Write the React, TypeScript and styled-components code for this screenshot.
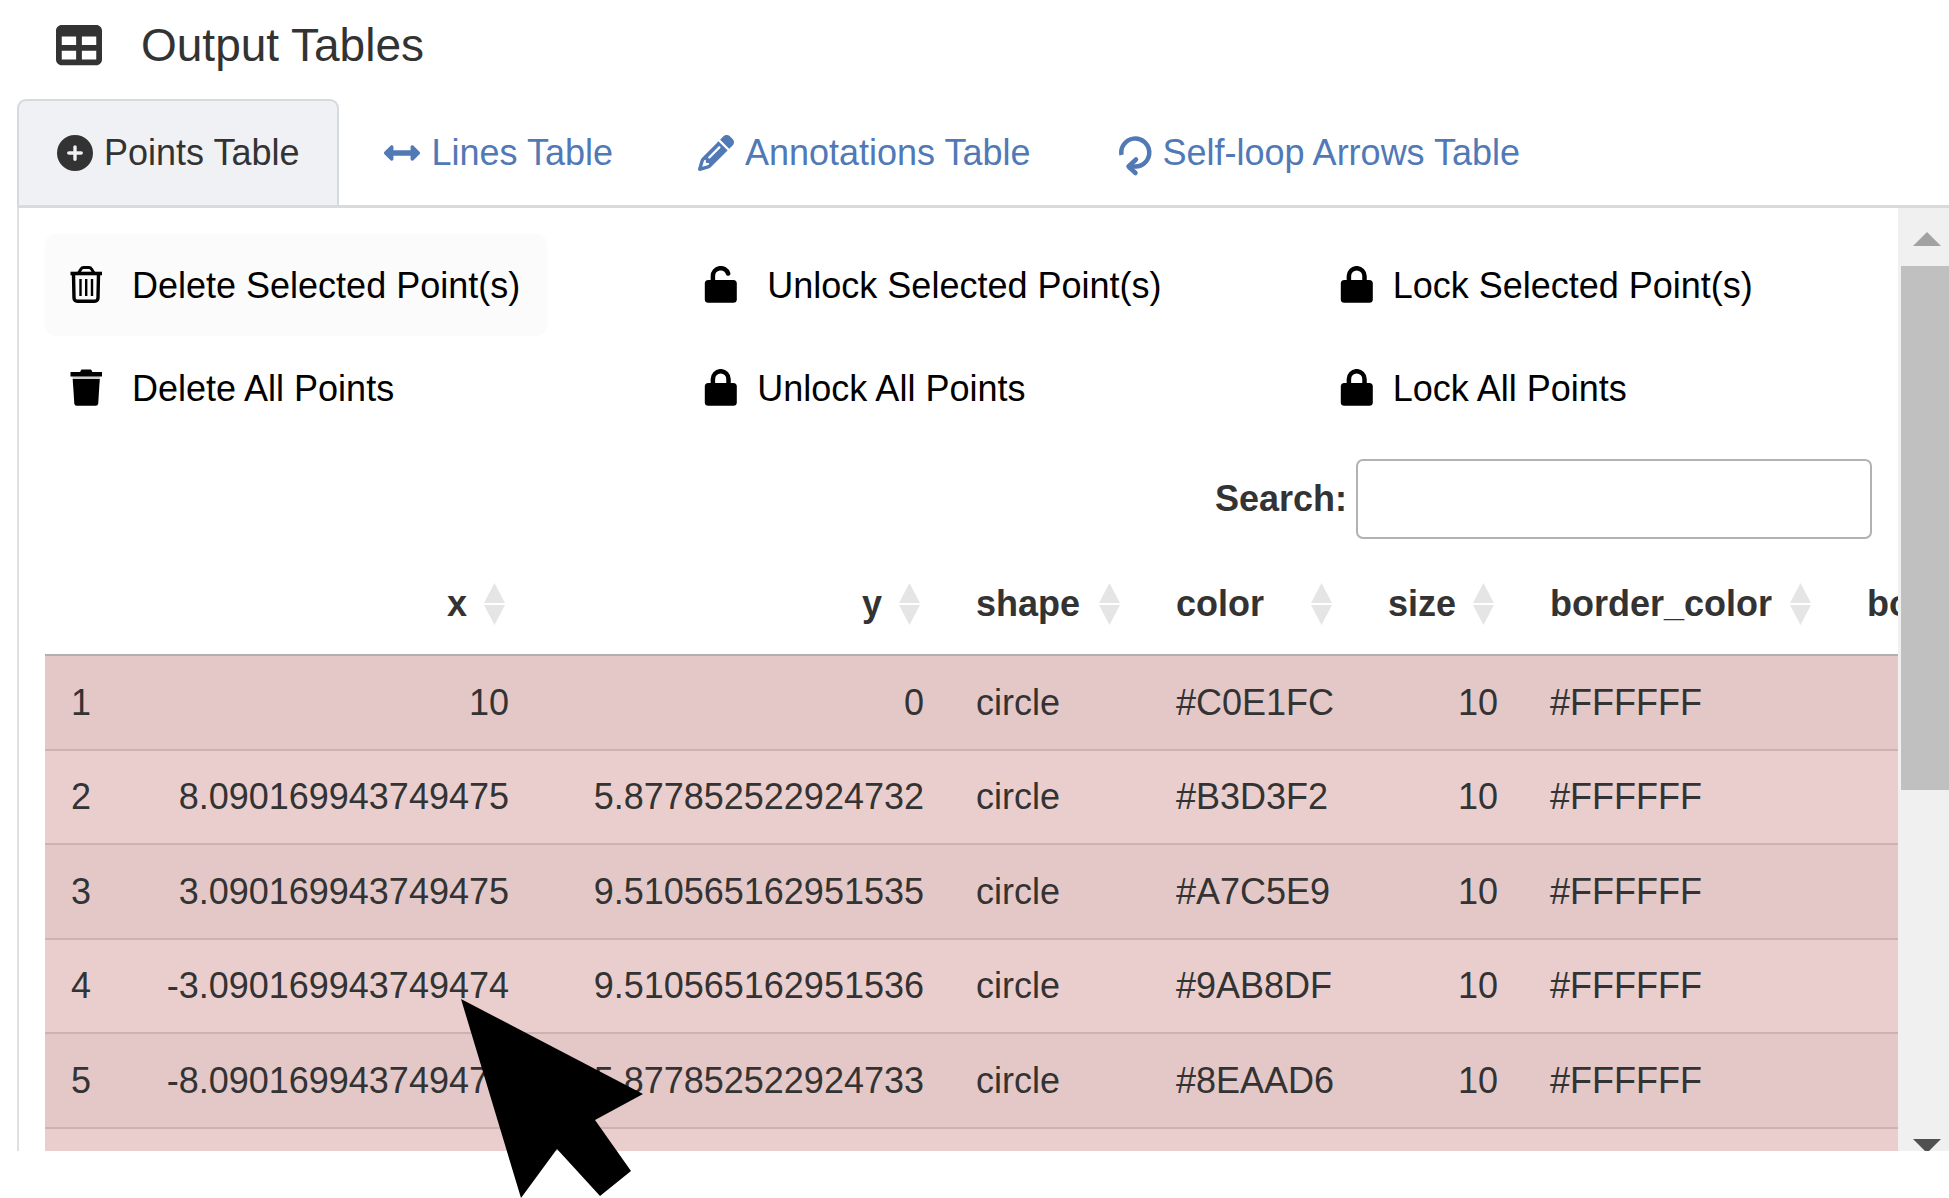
import React from "react";
import styled, { createGlobalStyle } from "styled-components";
import { FaArrowsAltH } from "react-icons/fa";
import { FaCirclePlus, FaPencil, FaTable } from "react-icons/fa6";

const GlobalStyle = createGlobalStyle`
  *, *::before, *::after { box-sizing: border-box; }
  body {
    margin: 0;
    background: #fff;
    color: #333;
    font-family: "Liberation Sans", Arial, Helvetica, sans-serif;
    font-size: 36px;
    line-height: 42px;
  }
`;

const Page = styled.main`
  position: relative;
  display: flex;
  flex-direction: column;
  height: 100vh;
  padding: 0 0 47px 17px;
  overflow: hidden;
`;

const Header = styled.header`
  display: flex;
  align-items: center;
  gap: 39px;
  padding: 18px 0 27px 39px;
`;

const Title = styled.h1`
  margin: 0;
  font-size: 46px;
  font-weight: 400;
  line-height: 54px;
`;

const Tabs = styled.nav`
  display: flex;
  gap: 5px;
  border-bottom: 3px solid #dadada;
`;

const Tab = styled.a<{ $active?: boolean }>`
  display: flex;
  align-items: center;
  gap: 11px;
  height: 106px;
  padding: 0 38px;
  border: 2px solid ${(p) => (p.$active ? "#d5dadf" : "transparent")};
  border-bottom: 0;
  border-radius: 9px 9px 0 0;
  background: ${(p) => (p.$active ? "#f0f1f4" : "transparent")};
  color: ${(p) => (p.$active ? "#333" : "#5079b6")};
  text-decoration: none;
  white-space: nowrap;
`;

const Panel = styled.section`
  flex: 1;
  min-height: 0;
  display: flex;
  border-left: 2px solid #e0e0e2;
`;

const Content = styled.div`
  flex: 1;
  min-width: 0;
  padding: 26px 0 0 26px;
  overflow: hidden;
`;

const Toolbar = styled.div`
  display: grid;
  grid-template-columns: 12fr 12fr 11fr;
  justify-items: start;
  row-gap: 1px;
`;

const Action = styled.button<{ $hovered?: boolean; $wide?: boolean }>`
  display: flex;
  align-items: center;
  gap: ${(p) => (p.$wide ? 28 : 18)}px;
  height: 102px;
  padding: 2px 27px 0 23px;
  border: 0;
  border-radius: 10px;
  background: ${(p) => (p.$hovered ? "#fbfbfb" : "transparent")};
  color: #000;
  font: inherit;
  white-space: nowrap;
`;

const SearchBar = styled.div`
  display: flex;
  justify-content: flex-end;
  align-items: center;
  gap: 9px;
  padding: 20px 26px 10px 0;
  font-weight: 700;
`;

const SearchInput = styled.input`
  width: 516px;
  height: 80px;
  padding: 10px;
  border: 2px solid #b2b2b2;
  border-radius: 7px;
  background: #fff;
  font: inherit;
  font-weight: 400;
`;

const DataTable = styled.table`
  width: 2096px;
  table-layout: fixed;
  border-spacing: 0;
`;

const Col = styled.col<{ $width: number }>`
  width: ${(p) => p.$width}px;
`;

const HeadCell = styled.th`
  height: 107px;
  padding: 4px 30px 0 26px;
  border-bottom: 2px solid #b0b0b0;
`;

const SortButton = styled.button<{ $numeric?: boolean }>`
  display: flex;
  align-items: center;
  justify-content: ${(p) => (p.$numeric ? "flex-end" : "space-between")};
  gap: 17px;
  width: 100%;
  padding: 0;
  border: 0;
  background: none;
  color: inherit;
  font: inherit;
`;

const Row = styled.tr`
  height: 94px;
  background: #eacece;
  &:nth-child(odd) {
    height: 95px;
    background: #e4c8c8;
  }
`;

const Cell = styled.td<{ $numeric?: boolean }>`
  padding: 0 26px;
  border-bottom: 2px solid #cdb2b3;
  text-align: ${(p) => (p.$numeric ? "right" : "left")};
  white-space: nowrap;
`;

const Scrollbar = styled.div`
  flex: none;
  display: flex;
  flex-direction: column;
  width: 51px;
  padding-left: 3px;
  background: #f0f0f0;
`;

const ScrollButton = styled.button<{ $down?: boolean }>`
  flex: none;
  display: flex;
  justify-content: center;
  height: ${(p) => (p.$down ? 12 : 58)}px;
  padding: ${(p) => (p.$down ? 0 : 24)}px 0 0 3px;
  border: 0;
  background: none;
  overflow: hidden;
  color: ${(p) => (p.$down ? "#505050" : "#a2a2a2")};
`;

const ScrollTrack = styled.div`
  flex: 1;
`;

const ScrollThumb = styled.div`
  height: 60%;
  background: #c0c0c0;
`;

const Pointer = styled.svg`
  position: absolute;
  left: 461px;
  top: 999px;
`;

const LoopIcon = () => (
  <svg width="36" height="36" viewBox="0 0 36 36" overflow="visible" fill="none" stroke="currentColor" strokeWidth="4.500" aria-hidden="true">
    <path d="M5.500 20A14 14 0 1 1 19.500 31.500H13" />
    <path d="M20 24.500l-7.500 7 7 6.500" strokeLinecap="round" strokeLinejoin="round" />
  </svg>
);

const TrashOutlineIcon = () => (
  <svg width="36" height="40" viewBox="0 0 36 40" fill="none" stroke="currentColor" aria-hidden="true">
    <path d="M2.500 7.500H34" strokeWidth="3.600" />
    <path d="M10.500 7l2.500-4q1-1.500 2.500-1.500h5.500q1.500 0 2.500 1.500l2.500 4" strokeWidth="3" />
    <path d="M5.500 8l.5 24q.2 3.200 3.400 3.200h17.200q3.200 0 3.400-3.200l.5-24" strokeWidth="3.400" />
    <path d="M12.500 13v17M18.200 13v17M24 13v17" strokeWidth="2.400" />
  </svg>
);

const TrashIcon = () => (
  <svg width="36" height="40" viewBox="0 0 36 40" fill="currentColor" aria-hidden="true">
    <path d="M2.500 3H12l1.500-2.500h9.500L24.500 3H34v4.500H2.500z" />
    <path d="M4.500 7.500h27.500v2.500H4.500z" opacity="0.200" />
    <path d="M4.700 10h27.100l-1.600 24.500q-.2 2.300-2.500 2.300H8.800q-2.300 0-2.500-2.300z" />
  </svg>
);

const LockIcon = ({ open }: { open?: boolean }) => (
  <svg width="36" height="40" viewBox="0 0 36 40" aria-hidden="true">
    <rect x="1.800" y="14" width="32" height="22.700" rx="3.500" fill="currentColor" />
    <path
      d={open ? "M9.900 16V10a7.800 7.800 0 0 1 15.200-2.500" : "M9.900 16V10a7.800 7.800 0 0 1 15.600 0V16"}
      fill="none"
      stroke="currentColor"
      strokeWidth="4.500"
      strokeLinecap="round"
    />
  </svg>
);

const SortIcon = () => (
  <svg width="21" height="42" viewBox="0 0 21 42" fill="#e5e5e5" aria-hidden="true">
    <path d="M10.500 0L21 20H0zM0 22h21L10.500 42z" />
  </svg>
);

const actions = [
  { label: "Delete Selected Point(s)", icon: <TrashOutlineIcon />, wide: true, hovered: true },
  { label: "Unlock Selected Point(s)", icon: <LockIcon open />, wide: true },
  { label: "Lock Selected Point(s)", icon: <LockIcon /> },
  { label: "Delete All Points", icon: <TrashIcon />, wide: true },
  { label: "Unlock All Points", icon: <LockIcon /> },
  { label: "Lock All Points", icon: <LockIcon /> },
];

const columns = [
  { name: "", width: 95 },
  { name: "x", width: 395, numeric: true },
  { name: "y", width: 415, numeric: true },
  { name: "shape", width: 200 },
  { name: "color", width: 212 },
  { name: "size", width: 162, numeric: true },
  { name: "border_color", width: 317 },
  { name: "border_width", width: 300 },
];

const points = [
  ["1", "10", "0", "circle", "#C0E1FC", "10", "#FFFFFF", ""],
  ["2", "8.090169943749475", "5.877852522924732", "circle", "#B3D3F2", "10", "#FFFFFF", ""],
  ["3", "3.090169943749475", "9.510565162951535", "circle", "#A7C5E9", "10", "#FFFFFF", ""],
  ["4", "-3.090169943749474", "9.510565162951536", "circle", "#9AB8DF", "10", "#FFFFFF", ""],
  ["5", "-8.090169943749473", "5.877852522924733", "circle", "#8EAAD6", "10", "#FFFFFF", ""],
  ["", "", "", "", "", "", "", ""],
];

export default function App() {
  return (
    <>
      <GlobalStyle />
      <Page>
        <Header>
          <FaTable size={46} />
          <Title>Output Tables</Title>
        </Header>
        <Tabs>
          <Tab href="#points" $active aria-current="page">
            <FaCirclePlus size={36} />
            Points Table
          </Tab>
          <Tab href="#lines">
            <FaArrowsAltH size={36} />
            Lines Table
          </Tab>
          <Tab href="#annotations">
            <FaPencil size={36} />
            Annotations Table
          </Tab>
          <Tab href="#loops">
            <LoopIcon />
            Self-loop Arrows Table
          </Tab>
        </Tabs>
        <Panel>
          <Content>
            <Toolbar>
              {actions.map((a) => (
                <Action key={a.label} type="button" $wide={a.wide} $hovered={a.hovered}>
                  {a.icon}
                  {a.label}
                </Action>
              ))}
            </Toolbar>
            <SearchBar>
              <label htmlFor="search">Search:</label>
              <SearchInput id="search" type="search" />
            </SearchBar>
            <DataTable>
              <colgroup>
                {columns.map((c, i) => (
                  <Col key={i} $width={c.width} />
                ))}
              </colgroup>
              <thead>
                <tr>
                  {columns.map((c, i) => (
                    <HeadCell key={i} scope="col">
                      {c.name && (
                        <SortButton type="button" $numeric={c.numeric}>
                          {c.name}
                          <SortIcon />
                        </SortButton>
                      )}
                    </HeadCell>
                  ))}
                </tr>
              </thead>
              <tbody>
                {points.map((row, r) => (
                  <Row key={r}>
                    {row.map((value, i) => (
                      <Cell key={i} $numeric={columns[i].numeric}>
                        {value}
                      </Cell>
                    ))}
                  </Row>
                ))}
              </tbody>
            </DataTable>
          </Content>
          <Scrollbar>
            <ScrollButton type="button" aria-label="Scroll up">
              <svg width="28" height="14" viewBox="0 0 28 14" fill="currentColor">
                <path d="M14 0l14 14H0z" />
              </svg>
            </ScrollButton>
            <ScrollTrack>
              <ScrollThumb />
            </ScrollTrack>
            <ScrollButton type="button" aria-label="Scroll down" $down>
              <svg width="28" height="14" viewBox="0 0 28 14" fill="currentColor">
                <path d="M0 0h28L14 14z" />
              </svg>
            </ScrollButton>
          </Scrollbar>
        </Panel>
        <Pointer width="182" height="199" viewBox="0 0 182 199" aria-hidden="true">
          <path d="M0 0L182 95L134 121L170 172L139 197L96 150L60 199z" />
        </Pointer>
      </Page>
    </>
  );
}
